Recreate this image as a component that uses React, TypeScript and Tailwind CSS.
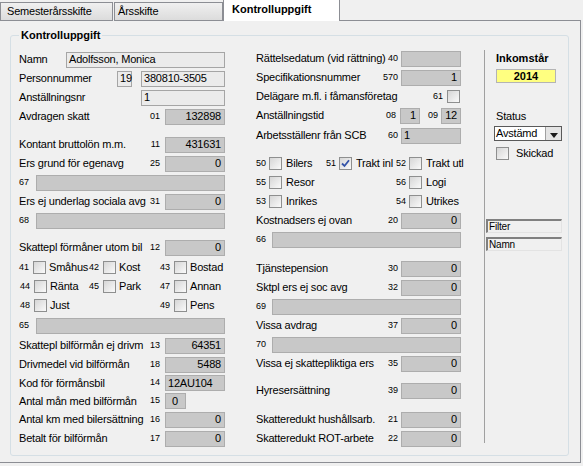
import type { ReactNode } from "react";

function Box({ v = "", left = false, light = false, className = "" }: { v?: string; left?: boolean; light?: boolean; className?: string }) {
  return (
    <div
      className={`h-[16px] shrink-0 border flex items-center leading-none whitespace-nowrap ${
        light ? "bg-[#ebebeb] border-[#a5a5a5]" : "bg-[#c8c8c8] border-[#adadad]"
      } ${left ? "justify-start pl-[2px]" : "justify-end pr-[3px]"} ${className}`}
    >
      {v}
    </div>
  );
}

function Check({ on = false }: { on?: boolean }) {
  return (
    <span className="w-[13px] h-[13px] shrink-0 border border-[#8e8f8f] bg-linear-to-br from-[#d6d6d6] to-[#fafafa] flex items-center justify-center">
      {on && (
        <svg width="9" height="9" viewBox="0 0 9 9">
          <path d="M1 4.5 L3.5 7 L8 1.2" fill="none" stroke="#3353a8" strokeWidth="1.8" />
        </svg>
      )}
    </span>
  );
}

function Row({ className = "h-[19px]", children }: { className?: string; children: ReactNode }) {
  return <div className={`flex items-center ${className}`}>{children}</div>;
}

const Lbl = ({ children }: { children: ReactNode }) => (
  <span className="flex-1 whitespace-nowrap">{children}</span>
);

// left column: numbered value row
function LRow({ label, n, v, className }: { label: string; n: string; v: string; className?: string }) {
  return (
    <Row className={className}>
      <Lbl>{label}</Lbl>
      <span className="text-[9px] mr-[5px] tracking-normal">{n}</span>
      <Box v={v} className="w-[60px]" />
    </Row>
  );
}

function RRow({ label, n, v, className }: { label: string; n: string; v: string; className?: string }) {
  return (
    <Row className={className}>
      <Lbl>{label}</Lbl>
      <span className="text-[9px] mr-[3px] tracking-normal">{n}</span>
      <Box v={v} className="w-[60px]" />
    </Row>
  );
}

function Wide({ n, right = false, className }: { n: string; right?: boolean; className?: string }) {
  return (
    <Row className={className}>
      <span className={`text-[9px] tracking-normal ${right ? "w-[16px]" : "w-[17px]"}`}>{n}</span>
      <Box className="flex-1" />
    </Row>
  );
}

function Cb({ n, label, on = false, right = false }: { n: string; label: string; on?: boolean; right?: boolean }) {
  return (
    <div className="flex items-center whitespace-nowrap">
      <span className={`text-[9px] text-right tracking-normal ${right ? "w-[9px]" : "w-[11px]"}`}>{n}</span>
      <span className="ml-[4px]">
        <Check on={on} />
      </span>
      <span className={right ? "ml-[4px]" : "ml-[3px]"}>{label}</span>
    </div>
  );
}

export default function App() {
  return (
    <div className="w-[583px] h-[466px] overflow-hidden bg-[#f0f0f0] text-black text-[11px] tracking-[-0.2px] font-['Liberation_Sans',Arial,sans-serif]">
      {/* tabs */}
      <div className="flex w-[581px] h-[21px] items-end">
        <div className="w-[113px] h-[19px] border border-[#8c8e94] bg-linear-to-b from-[#f0f0f0] to-[#dcdcdc] pl-[6px] flex items-center">
          Semesterårsskifte
        </div>
        <div className="ml-[1px] w-[109px] h-[19px] border border-[#8c8e94] bg-linear-to-b from-[#f0f0f0] to-[#dcdcdc] pl-[3px] flex items-center">
          Årsskifte
        </div>
        <div className="w-[117px] h-[21px] border-x border-[#8c8e94] bg-white pl-[8px] pb-[3px] flex items-center font-bold tracking-normal">
          Kontrolluppgift
        </div>
        <div className="flex-1 h-[21px] border-b border-[#8c8e94]" />
      </div>

      {/* tab page */}
      <div className="w-[581px] h-[442px] border-r border-b border-[#8c8e94] pt-[7px]">
        <fieldset className="ml-[10px] w-[559px] h-[428px] border border-[#d5dfe5] rounded-[3px] pl-[8px]">
          <legend className="px-[2px] font-bold leading-[14px] tracking-normal">Kontrolluppgift</legend>
          <div className="flex mt-[8px]">
            {/* left column */}
            <div className="w-[206px] flex flex-col">
              <Row>
                <Lbl>Namn</Lbl>
                <Box light left v="Adolfsson, Monica" className="w-[159px]" />
              </Row>
              <Row>
                <Lbl>Personnummer</Lbl>
                <Box light left v="19" className="w-[15px] mr-[9px]" />
                <Box light left v="380810-3505" className="w-[84px]" />
              </Row>
              <Row>
                <Lbl>Anställningsnr</Lbl>
                <Box light left v="1" className="w-[84px]" />
              </Row>
              <LRow label="Avdragen skatt" n="01" v="132898" />
              <LRow label="Kontant bruttolön m.m." n="11" v="431631" className="h-[19px] mt-[9px]" />
              <LRow label="Ers grund för egenavg" n="25" v="0" />
              <Wide n="67" />
              <LRow label="Ers ej underlag sociala avg" n="31" v="0" />
              <Wide n="68" />
              <LRow label="Skattepl förmåner utom bil" n="12" v="0" className="h-[19px] mt-[8px]" />
              <div className="grid grid-cols-[69px_71px_1fr] h-[19px] mt-[1px] items-center">
                <Cb n="41" label="Småhus" />
                <Cb n="42" label="Kost" />
                <Cb n="43" label="Bostad" />
              </div>
              <div className="grid grid-cols-[69px_71px_1fr] h-[19px] items-center">
                <Cb n="44" label="Ränta" />
                <Cb n="45" label="Park" />
                <Cb n="47" label="Annan" />
              </div>
              <div className="grid grid-cols-[69px_71px_1fr] h-[19px] items-center">
                <Cb n="48" label="Just" />
                <span />
                <Cb n="49" label="Pens" />
              </div>
              <Wide n="65" className="h-[19px] mt-[1px]" />
              <LRow label="Skattepl bilförmån ej drivm" n="13" v="64351" className="h-[19px] mt-[1px]" />
              <LRow label="Drivmedel vid bilförmån" n="18" v="5488" />
              <Row className="h-[18px]">
                <Lbl>Kod för förmånsbil</Lbl>
                <span className="text-[9px] mr-[5px] tracking-normal">14</span>
                <Box v="12AU104" left className="w-[60px]" />
              </Row>
              <Row className="h-[18px]">
                <Lbl>Antal mån med bilförmån</Lbl>
                <span className="text-[9px] mr-[5px] tracking-normal">15</span>
                <div className="w-[60px] flex">
                  <Box v="0" left className="w-[21px] pl-[6px]" />
                </div>
              </Row>
              <LRow label="Antal km med bilersättning" n="16" v="0" />
              <LRow label="Betalt för bilförmån" n="17" v="0" />
            </div>

            {/* right column */}
            <div className="ml-[31px] w-[205px] flex flex-col -mt-[1px]">
              <RRow label="Rättelsedatum (vid rättning)" n="40" v="" />
              <RRow label="Specifikationsnummer" n="570" v="1" />
              <Row>
                <Lbl>Delägare m.fl. i fåmansföretag</Lbl>
                <span className="text-[9px] mr-[4px] tracking-normal">61</span>
                <span className="mr-[1px]">
                  <Check />
                </span>
              </Row>
              <Row>
                <Lbl>Anställningstid</Lbl>
                <span className="text-[9px] mr-[4px] tracking-normal">08</span>
                <Box v="1" className="w-[20px]" />
                <span className="text-[9px] ml-[8px] mr-[3px] tracking-normal">09</span>
                <Box v="12" className="w-[20px]" />
              </Row>
              <Row className="h-[19px] mt-[1px]">
                <Lbl>Arbetsställenr från SCB</Lbl>
                <span className="text-[9px] mr-[3px] tracking-normal">60</span>
                <Box v="1" left className="w-[60px]" />
              </Row>
              <div className="grid grid-cols-[70px_70px_1fr] h-[19px] mt-[9px] items-center">
                <Cb right n="50" label="Bilers" />
                <Cb right n="51" label="Trakt inl" on />
                <Cb right n="52" label="Trakt utl" />
              </div>
              <div className="grid grid-cols-[70px_70px_1fr] h-[19px] items-center">
                <Cb right n="55" label="Resor" />
                <span />
                <Cb right n="56" label="Logi" />
              </div>
              <div className="grid grid-cols-[70px_70px_1fr] h-[19px] items-center">
                <Cb right n="53" label="Inrikes" />
                <span />
                <Cb right n="54" label="Utrikes" />
              </div>
              <RRow label="Kostnadsers ej ovan" n="20" v="0" />
              <Wide right n="66" />
              <RRow label="Tjänstepension" n="30" v="0" className="h-[19px] mt-[10px]" />
              <RRow label="Sktpl ers ej soc avg" n="32" v="0" />
              <Wide right n="69" />
              <RRow label="Vissa avdrag" n="37" v="0" />
              <Wide right n="70" />
              <RRow label="Vissa ej skattepliktiga ers" n="35" v="0" />
              <RRow label="Hyresersättning" n="39" v="0" className="h-[19px] mt-[8px]" />
              <RRow label="Skatteredukt hushållsarb." n="21" v="0" className="h-[19px] mt-[10px]" />
              <RRow label="Skatteredukt ROT-arbete" n="22" v="0" />
            </div>

            {/* side panel */}
            <div className="ml-[23px] w-[80px] h-[393px] border-l border-[#a0a0a0] flex flex-col">
              <div className="ml-[11px] h-[16px] flex items-center font-bold tracking-normal">Inkomstår</div>
              <div className="ml-[11px] mt-[3px] w-[60px] h-[14px] bg-[#ffff80] border border-[#b4b4b4] flex items-center justify-center font-bold tracking-normal leading-none">
                2014
              </div>
              <div className="ml-[11px] mt-[26px] h-[14px] flex items-center">Status</div>
              <div className="ml-[9px] mt-[3px] w-[68px] h-[15px] border border-[#5a5a5a] bg-white flex">
                <span className="flex-1 pl-[1px] flex items-center leading-none">Avstämd</span>
                <span className="w-[16px] h-full bg-[#e4e4e4] border-l border-[#a0a0a0] flex items-end justify-center pb-[2px]">
                  <svg width="8" height="5" viewBox="0 0 8 5">
                    <path d="M0 0 H8 L4 5 Z" fill="#1a1a1a" />
                  </svg>
                </span>
              </div>
              <div className="ml-[11px] mt-[5px] h-[14px] flex items-center">
                <Check />
                <span className="ml-[7px]">Skickad</span>
              </div>
              <div className="ml-[1px] mt-[59px] w-[76px] h-[14px] border-t-2 border-l-2 border-r border-b border-t-[#808080] border-l-[#808080] border-r-[#e3e3e3] border-b-[#e3e3e3] text-[10px] leading-none flex items-center pl-[1px]">
                Filter
              </div>
              <div className="ml-[1px] mt-[4px] w-[76px] h-[14px] border-t-2 border-l-2 border-r border-b border-t-[#808080] border-l-[#808080] border-r-[#e3e3e3] border-b-[#e3e3e3] text-[10px] leading-none flex items-center pl-[1px]">
                Namn
              </div>
            </div>
          </div>
        </fieldset>
      </div>
    </div>
  );
}
